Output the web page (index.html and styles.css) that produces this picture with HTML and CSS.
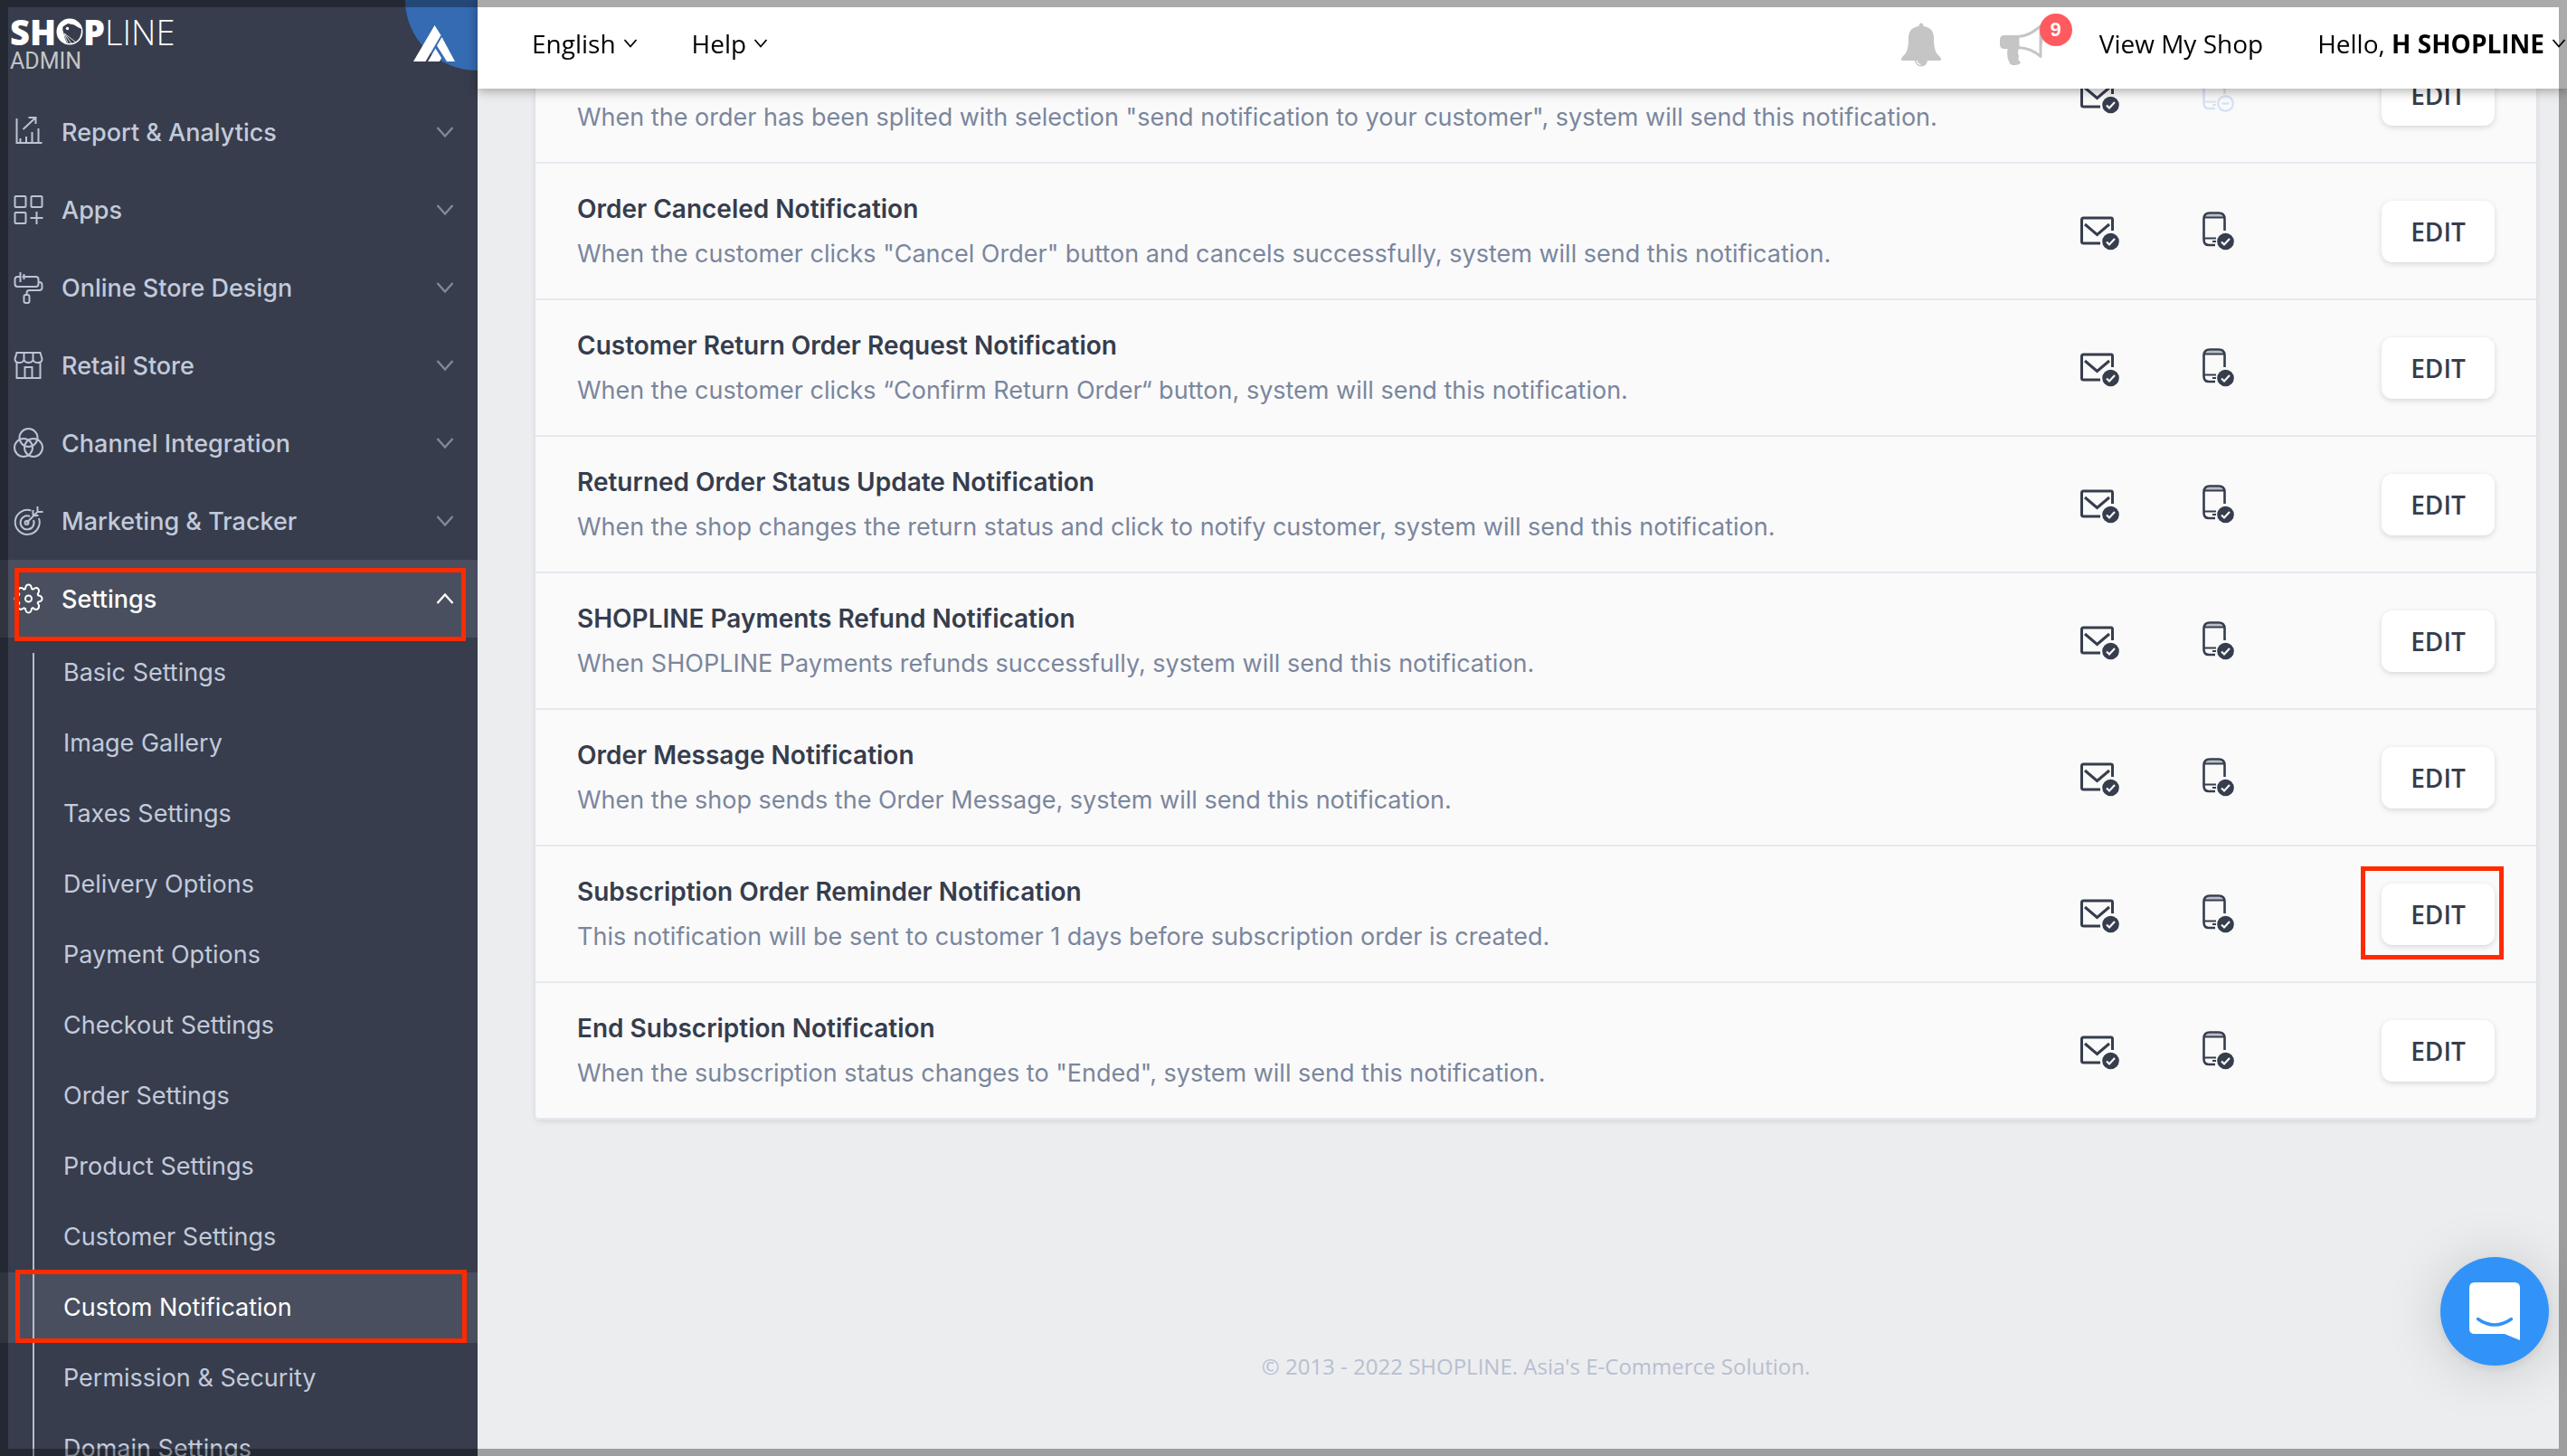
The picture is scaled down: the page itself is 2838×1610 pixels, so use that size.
FILE: index.html
```html
<!DOCTYPE html>
<html lang="en">
<head>
<meta charset="utf-8">
<meta name="viewport" content="width=device-width, initial-scale=1">
<title>SHOPLINE Admin - Custom Notification</title>
<link rel="stylesheet" href="styles.css">
</head>
<body>
<svg class="sprite" aria-hidden="true">
  <symbol id="chevron" viewBox="0 0 20 14"><path d="M1.500 2 10 11.500 18.500 2" fill="none" stroke="currentColor" stroke-width="2.400"/></symbol>
  <symbol id="caret" viewBox="0 0 16 12"><path d="M1.500 2 8 9.500 14.500 2" fill="none" stroke="currentColor" stroke-width="1.800"/></symbol>
  <symbol id="mail-on" viewBox="0 0 44 44">
    <path d="M22 35H3.500Q1.500 35 1.500 33V9Q1.500 7 3.500 7H34Q35.500 7 35.500 9V21" fill="none" stroke="currentColor" stroke-width="3"/>
    <path d="M5 14 18.500 25.500 32 14" fill="none" stroke="currentColor" stroke-width="3"/>
    <circle cx="33.500" cy="33" r="9.300" fill="currentColor"/>
    <path d="M29 33.500 32 36.500 38 30" fill="none" stroke="#fafafa" stroke-width="2.200"/>
  </symbol>
  <symbol id="phone-on" viewBox="0 0 36 44">
    <path d="M6 3H20Q23 3 24 6H2Q3 3 6 3Z" fill="#b9bec6"/>
    <path d="M14 37H7Q1.500 37 1.500 31V8Q1.500 1.500 8 1.500H18Q24.500 1.500 24.500 8V21" fill="none" stroke="currentColor" stroke-width="2.600"/>
    <path d="M2 6.500H24M2 29.500H15M11 33H15" fill="none" stroke="currentColor" stroke-width="2"/>
    <circle cx="25.500" cy="33" r="9.300" fill="currentColor"/>
    <path d="M21 33.500 24 36.500 30 30" fill="none" stroke="#fafafa" stroke-width="2.200"/>
  </symbol>
  <symbol id="phone-off" viewBox="0 0 36 44">
    <path d="M14 37H7Q1.500 37 1.500 31V8Q1.500 1.500 8 1.500H18Q24.500 1.500 24.500 8V21" fill="none" stroke="currentColor" stroke-width="2.600"/>
    <path d="M2 6.500H24M2 29.500H15M11 33H15" fill="none" stroke="currentColor" stroke-width="2"/>
    <circle cx="25.500" cy="31.500" r="8.300" fill="none" stroke="currentColor" stroke-width="2.400"/>
    <path d="M21.500 31.500H29.500" stroke="currentColor" stroke-width="2.400"/>
  </symbol>
</svg>

<header class="topbar">
  <div class="topbar-group">
    <button class="menu-btn" type="button">English <svg class="caret"><use href="#caret"/></svg></button>
    <button class="menu-btn" type="button">Help <svg class="caret"><use href="#caret"/></svg></button>
  </div>
  <div class="topbar-group topbar-right">
    <button class="icon-btn" type="button" aria-label="Notifications">
      <svg width="46" height="50" viewBox="0 0 46 50" fill="#c5c5c5">
        <path d="M23 0.500C24.600 0.500 25.300 1.800 25.600 4C33 5 37 9.500 37 17C37 29 39 34 43.500 37.500C46 40 45 42 43.500 42H2.500C1 42 0 40 2.500 37.500C7 34 9 29 9 17C9 9.500 13 5 20.400 4C20.700 1.800 21.400 0.500 23 0.500Z"/>
        <circle cx="23" cy="41.500" r="7"/>
        <path d="M18.200 42Q18.800 46 22.500 46.300" fill="none" stroke="#fff" stroke-width="1.300"/>
      </svg>
    </button>
    <button class="icon-btn promo" type="button" aria-label="Announcements">
      <svg width="50" height="46" viewBox="0 0 50 46">
        <path d="M5 12H20V27H21Q19 31 21 35Q20 39 21 40L23 42Q22 45 16 45Q12 45 11 43Q7 36 8.500 27H5Q0 27 0 22V17Q0 12 5 12Z" fill="#c5c5c5"/>
        <path d="M20 13.500C31 13 37 8 45 2V35.500C38 29 31 26 20 25.500Z" fill="#fff" stroke="#c5c5c5" stroke-width="3" stroke-linejoin="round"/>
        <path d="M45 12Q50 18 45 24Z" fill="#c5c5c5"/>
      </svg>
      <span class="badge">9</span>
    </button>
    <a class="shop-link" href="#">View My Shop</a>
    <button class="menu-btn account" type="button"><span>Hello, <b>H SHOPLINE</b></span><svg class="caret"><use href="#caret"/></svg></button>
  </div>
</header>

<aside class="sidebar">
  <div class="brand">
    <a class="logo" href="#" aria-label="SHOPLINE Admin">
      <span class="wordmark"><span class="heavy">SH</span><svg class="logo-o" viewBox="0 0 30 30">
        <circle cx="15" cy="15" r="14.500" fill="#fff"/>
        <path d="M7.500 9.500 13 6 20 7.500Q25 11 28 12Q28.500 24 19 27.500L12 28Q9 22 8.500 17Q6.500 13 7.500 9.500Z" fill="#373d4c"/>
        <circle cx="12.500" cy="11.500" r="1.700" fill="#fff"/>
        <path d="M9 17 21 26M9 17 17 28M9 18 13 28" stroke="#fff" stroke-width="0.800"/>
      </svg><span class="heavy">P</span><span class="thin">LINE</span></span>
      <span class="sub">ADMIN</span>
    </a>
    <a class="corner" href="#" aria-label="Academy">
      <svg width="46" height="40" viewBox="0 0 46 40" fill="#fff">
        <path d="M23.500 0 30.500 11 13.500 40H0Z"/><path d="M31.500 13 46 40H37L26 22.500Z"/><path d="M24.500 25.500 31 36 29 40H16Z"/>
      </svg>
    </a>
  </div>
  <nav>
    <ul class="nav">
      <li><a class="nav-item" href="#">
        <svg class="nav-icon" viewBox="0 0 32 36"><path d="M3 3V30H31M7 29V25M13.500 29V23M20 29V18M27 29V14M10 15 24 2M16 2H24V9"/></svg>
        <span>Report &amp; Analytics</span><svg class="chev"><use href="#chevron"/></svg></a></li>
      <li><a class="nav-item" href="#">
        <svg class="nav-icon" viewBox="0 0 32 36"><rect x="1" y="3" width="12" height="12" rx="1"/><rect x="19" y="3" width="12" height="12" rx="1"/><rect x="1" y="21" width="12" height="12" rx="1"/><path d="M25 20V34M18 27H32"/></svg>
        <span>Apps</span><svg class="chev"><use href="#chevron"/></svg></a></li>
      <li><a class="nav-item" href="#">
        <svg class="nav-icon" viewBox="0 0 32 36"><path d="M7 1V12M11 3V9M9 6H24Q27 6 27 9V14Q27 17 24 17H4Q1 17 1 14V9Q1 6 4 6H6M28 12Q31 12 31 15V18Q31 21 28 21H17Q14 21 14 24V26"/><rect x="11" y="26" width="6" height="9" rx="2"/></svg>
        <span>Online Store Design</span><svg class="chev"><use href="#chevron"/></svg></a></li>
      <li><a class="nav-item" href="#">
        <svg class="nav-icon" viewBox="0 0 32 36"><path d="M3 4H29L31 11Q31 15 26.500 15Q22 15 21 12Q20 15 16 15Q12 15 11 12Q10 15 5.500 15Q1 15 1 11ZM11 4V12M21 4V12M3 15V32H29V15M12 32V20H20V32"/></svg>
        <span>Retail Store</span><svg class="chev"><use href="#chevron"/></svg></a></li>
      <li><a class="nav-item" href="#">
        <svg class="nav-icon" viewBox="0 0 32 36"><circle cx="16" cy="12" r="10"/><circle cx="10.500" cy="23" r="10"/><circle cx="21.500" cy="23" r="10"/></svg>
        <span>Channel Integration</span><svg class="chev"><use href="#chevron"/></svg></a></li>
      <li><a class="nav-item" href="#">
        <svg class="nav-icon" viewBox="0 0 32 36"><path d="M19 6.600A13.500 13.500 0 1 0 27.500 15M17.500 13A7.500 7.500 0 1 0 21.500 17M14 20 26 8M21 6V11L25 12.500M26 2V8H32M21 12H27"/><circle cx="14" cy="20" r="2"/></svg>
        <span>Marketing &amp; Tracker</span><svg class="chev"><use href="#chevron"/></svg></a></li>
      <li><a class="nav-item active marked" href="#">
        <svg class="nav-icon" viewBox="0 0 32 36"><path d="M12.500 7Q13 2.500 16 2.500T19.500 7L21 7.700Q24.500 4.800 26.600 7T26.200 13L27 14.500Q31 15 31 18T27 21.500L26.200 23Q28.800 26.500 26.600 29T21 28.300L19.500 29Q19 33.500 16 33.500T12.500 29L11 28.300Q7.500 31 5.400 29T5.800 23L5 21.500Q1 21 1 18T5 14.500L5.800 13Q3.200 9.500 5.400 7T11 7.700Z"/><circle cx="16" cy="18" r="3.500"/></svg>
        <span>Settings</span><svg class="chev up"><use href="#chevron"/></svg></a>
        <ul class="subnav">
          <li><a href="#">Basic Settings</a></li>
          <li><a href="#">Image Gallery</a></li>
          <li><a href="#">Taxes Settings</a></li>
          <li><a href="#">Delivery Options</a></li>
          <li><a href="#">Payment Options</a></li>
          <li><a href="#">Checkout Settings</a></li>
          <li><a href="#">Order Settings</a></li>
          <li><a href="#">Product Settings</a></li>
          <li><a href="#">Customer Settings</a></li>
          <li><a class="active marked" href="#">Custom Notification</a></li>
          <li><a href="#">Permission &amp; Security</a></li>
          <li><a href="#">Domain Settings</a></li>
        </ul>
      </li>
    </ul>
  </nav>
</aside>

<main class="content">
  <ul class="card">
    <li class="row">
      <div class="info"><p>When the order has been splited with selection "send notification to your customer", system will send this notification.</p></div>
      <svg class="mail"><use href="#mail-on"/></svg><svg class="phone off"><use href="#phone-off"/></svg>
      <button class="edit" type="button">EDIT</button>
    </li>
    <li class="row">
      <div class="info"><h2>Order Canceled Notification</h2><p>When the customer clicks "Cancel Order" button and cancels successfully, system will send this notification.</p></div>
      <svg class="mail"><use href="#mail-on"/></svg><svg class="phone"><use href="#phone-on"/></svg>
      <button class="edit" type="button">EDIT</button>
    </li>
    <li class="row">
      <div class="info"><h2>Customer Return Order Request Notification</h2><p>When the customer clicks “Confirm Return Order“ button, system will send this notification.</p></div>
      <svg class="mail"><use href="#mail-on"/></svg><svg class="phone"><use href="#phone-on"/></svg>
      <button class="edit" type="button">EDIT</button>
    </li>
    <li class="row">
      <div class="info"><h2>Returned Order Status Update Notification</h2><p>When the shop changes the return status and click to notify customer, system will send this notification.</p></div>
      <svg class="mail"><use href="#mail-on"/></svg><svg class="phone"><use href="#phone-on"/></svg>
      <button class="edit" type="button">EDIT</button>
    </li>
    <li class="row">
      <div class="info"><h2>SHOPLINE Payments Refund Notification</h2><p>When SHOPLINE Payments refunds successfully, system will send this notification.</p></div>
      <svg class="mail"><use href="#mail-on"/></svg><svg class="phone"><use href="#phone-on"/></svg>
      <button class="edit" type="button">EDIT</button>
    </li>
    <li class="row">
      <div class="info"><h2>Order Message Notification</h2><p>When the shop sends the Order Message, system will send this notification.</p></div>
      <svg class="mail"><use href="#mail-on"/></svg><svg class="phone"><use href="#phone-on"/></svg>
      <button class="edit" type="button">EDIT</button>
    </li>
    <li class="row">
      <div class="info"><h2>Subscription Order Reminder Notification</h2><p>This notification will be sent to customer 1 days before subscription order is created.</p></div>
      <svg class="mail"><use href="#mail-on"/></svg><svg class="phone"><use href="#phone-on"/></svg>
      <button class="edit marked" type="button">EDIT</button>
    </li>
    <li class="row">
      <div class="info"><h2>End Subscription Notification</h2><p>When the subscription status changes to "Ended", system will send this notification.</p></div>
      <svg class="mail"><use href="#mail-on"/></svg><svg class="phone"><use href="#phone-on"/></svg>
      <button class="edit" type="button">EDIT</button>
    </li>
  </ul>
  <footer class="footer">© 2013 - 2022 SHOPLINE. Asia's E-Commerce Solution.</footer>
</main>

<button class="chat" type="button" aria-label="Open chat">
  <svg width="56" height="64" viewBox="0 0 56 64">
    <path d="M6 0H50Q56 0 56 6V64L39 57H6Q0 57 0 51V6Q0 0 6 0Z" fill="#fff"/>
    <path d="M9.500 40.500Q28 53.500 46.500 40.500" fill="none" stroke="#3193f8" stroke-width="3.400" stroke-linecap="round"/>
  </svg>
</button>
<div class="frame"></div>
</body>
</html>
```
FILE: styles.css
```css
* { box-sizing: border-box; }

body {
  margin: 0;
  min-height: 100vh;
  background: #ecedef;
  font-family: Inter, "Liberation Sans", sans-serif;
  font-size: 27px;
  color: #363d4d;
  overflow: hidden;
}

ul { list-style: none; margin: 0; padding: 0; }
a { color: inherit; text-decoration: none; }
button { border: 0; padding: 0; background: none; font: inherit; color: inherit; cursor: pointer; }
svg { display: block; flex: none; }
.sprite { position: absolute; width: 0; height: 0; }

/* Top bar */
.topbar {
  position: fixed;
  inset: 0 0 auto 528px;
  z-index: 3;
  height: 98px;
  padding: 0 0 2px 60px;
  display: flex;
  justify-content: space-between;
  align-items: center;
  background: #fff;
  box-shadow: 0 2px 12px rgba(0, 0, 0, .35);
  font-family: "Open Sans", "Noto Sans", sans-serif;
  font-size: 28px;
  color: #000;
}
.topbar-group { display: flex; align-items: center; gap: 60px; }
.topbar-right { gap: 0; }
.menu-btn { display: flex; align-items: center; gap: 8px; white-space: nowrap; }
.caret { width: 16px; height: 12px; }
.icon-btn { position: relative; padding-top: 4px; }
.promo { margin-left: 64px; }
.badge {
  position: absolute;
  top: -8px;
  left: 44px;
  width: 36px;
  height: 36px;
  border-radius: 50%;
  background: #ff5a60;
  color: #fff;
  font: bold 22px/36px "Liberation Sans", sans-serif;
  text-align: center;
}
.shop-link { margin-left: 60px; }
.account { margin-left: 60px; padding-right: 1px; }

/* Sidebar */
.sidebar {
  position: fixed;
  inset: 0 auto 0 0;
  z-index: 2;
  width: 528px;
  overflow: hidden;
  background: #373d4c;
  color: #c2cadb;
}
.brand { display: flex; justify-content: space-between; height: 103px; }
.logo { padding: 16px 0 0 11px; color: #fff; }
.wordmark { display: flex; align-items: center; height: 38px; font: 38px/38px "Open Sans", sans-serif; }
.heavy { font-weight: 800; }
.thin { font-weight: 300; }
.logo-o { width: 30px; height: 30px; }
.sub { display: block; font: 25px/28px Roboto, sans-serif; color: #c3c5c9; }
.corner {
  width: 80px;
  height: 78px;
  padding: 28px 0 0 9px;
  border-bottom-left-radius: 100%;
  background: #356bb3;
}
.nav-item {
  position: relative;
  display: flex;
  align-items: center;
  height: 86px;
  padding: 0 26px 0 15px;
  font-weight: 500;
}
.nav-item span { flex: 1; padding-left: 20px; }
.nav-icon {
  width: 33px;
  height: 36px;
  fill: none;
  stroke: #bcc3d6;
  stroke-width: 2;
}
.chev { width: 20px; height: 14px; color: #7e899e; }
.chev.up { transform: rotate(180deg); }
.active { background: #494f5e; color: #fff; }
.active .chev { color: #fff; }
.active .nav-icon { stroke: #fff; }
.subnav { position: relative; }
.subnav::before {
  content: "";
  position: absolute;
  z-index: 1;
  inset: 17px auto 0 36px;
  width: 2px;
  background: #b4bccd;
}
.subnav a { position: relative; display: block; padding-left: 70px; line-height: 78px; }

/* Red call-out outlines */
.marked { position: relative; }
.marked::after {
  content: "";
  position: absolute;
  z-index: 2;
  inset: 9px 13px -4px 16px;
  border: 5px solid #ff2a00;
  pointer-events: none;
}
.subnav .marked::after { inset: -3px 12px 0 17px; }
.edit.marked::after { inset: -19px -10px -16px -23px; }

/* Notification list */
.content { margin-left: 528px; padding: 30px 34px 0 64px; }
.card {
  border-radius: 6px;
  background: #fafafa;
  box-shadow: 0 2px 6px rgba(40, 50, 80, .12);
}
.row {
  display: flex;
  align-items: center;
  padding: 25px 46px 24px;
  border-bottom: 2px solid #e5e9f0;
}
.info {
  flex: 1;
  display: flex;
  flex-direction: column;
  justify-content: flex-end;
  min-height: 100px;
  line-height: 50px;
  white-space: nowrap;
}
.info h2 { margin: 0; font-size: 28px; font-weight: 600; }
.info p { margin: 0; color: #7a869d; }
.mail { width: 44px; height: 44px; margin-right: 91px; }
.phone { width: 36px; height: 44px; margin-right: 162px; }
.phone.off { color: #d6e2f5; }
.edit {
  width: 125px;
  height: 68px;
  border-radius: 12px;
  background: #fff;
  box-shadow: 0 2px 6px rgba(0, 0, 0, .14);
  font-family: "Open Sans", "Noto Sans", sans-serif;
  font-size: 28px;
  font-weight: 600;
}
.footer {
  padding-top: 255px;
  text-align: center;
  font: 24px/36px "Open Sans", "Noto Sans", sans-serif;
  color: #b8bfd0;
}

.chat {
  position: fixed;
  right: 20px;
  bottom: 100px;
  z-index: 4;
  display: grid;
  place-items: center;
  width: 120px;
  height: 120px;
  border-radius: 50%;
  background: #3193f8;
  box-shadow: 0 4px 12px rgba(0, 0, 0, .08), 0 4px 64px rgba(0, 0, 0, .16);
}

/* Translucent border around the window */
.frame {
  position: fixed;
  inset: 0;
  z-index: 5;
  border: 8px solid rgba(0, 0, 0, .333);
  border-width: 8px 9px;
  pointer-events: none;
}
```
